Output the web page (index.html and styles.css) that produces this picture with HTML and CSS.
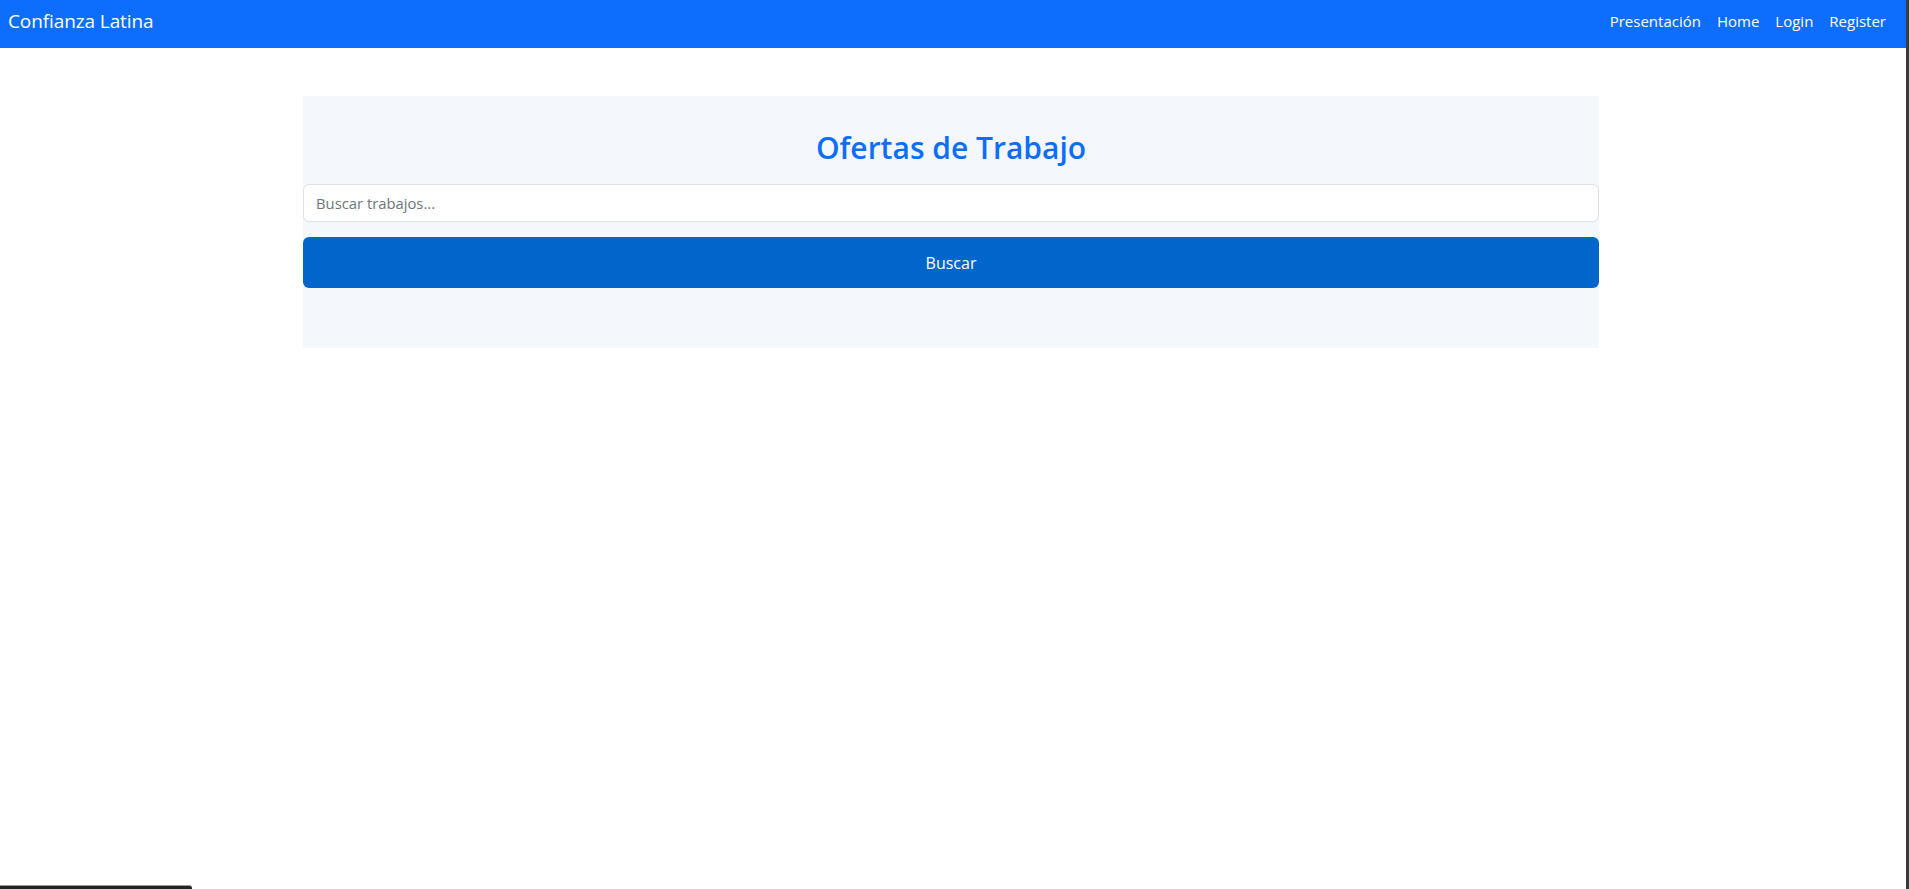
FILE: index.html
```html
<!DOCTYPE html>
<html lang="es">
<head>
<meta charset="utf-8">
<title>Confianza Latina</title>
<link rel="stylesheet" href="styles.css">
</head>
<body>
<div class="shell">
  <div class="page">
    <nav class="navbar">
      <a class="brand" href="#">Confianza Latina</a>
      <ul class="nav-links">
        <li><a href="#">Presentación</a></li>
        <li><a href="#">Home</a></li>
        <li><a href="#">Login</a></li>
        <li><a href="#">Register</a></li>
      </ul>
    </nav>
    <main class="main">
      <section class="card">
        <h2 class="title">Ofertas de Trabajo</h2>
        <form class="search">
          <input class="search-input" type="text" placeholder="Buscar trabajos...">
          <button class="search-btn" type="button">Buscar</button>
        </form>
      </section>
    </main>
  </div>
  <div class="edge"></div>
</div>
<div class="status-bar"></div>
</body>
</html>
```

FILE: styles.css
```css
* { box-sizing: border-box; }
html, body { margin: 0; padding: 0; height: 100%; }
body {
  font-family: "Open Sans", "Noto Sans", sans-serif;
  background: #fff;
  color: #212529;
}
.shell { display: flex; min-height: 100%; }
.page { flex: 1; min-width: 0; }
.edge { width: 3px; background: #3a3a3a; flex: none; }

.navbar {
  height: 48px;
  background: #0d6efd;
  display: flex;
  align-items: center;
  justify-content: space-between;
  padding: 0 12px 7px 8px;
}
.brand {
  color: #fff;
  text-decoration: none;
  font-size: 19px;
  letter-spacing: -0.1px;
}
.nav-links {
  list-style: none;
  margin: 0;
  padding: 0;
  display: flex;
}
.nav-links a {
  display: block;
  padding: 8px;
  color: #fff;
  text-decoration: none;
  font-size: 15px;
}

.main {
  display: flex;
  justify-content: center;
  padding: 48px 4px 0 0;
}
.card {
  width: 1296px;
  background: #f4f7fb;
  padding: 34px 0 60px;
}
.title {
  margin: 0 0 18px;
  text-align: center;
  color: #0d6efd;
  font-size: 30px;
  font-weight: 600;
  line-height: 1.2;
}
.search { display: flex; flex-direction: column; gap: 15px; }
.search-input {
  height: 38px;
  border: 1px solid #dee2e6;
  border-radius: 6px;
  background: #fff;
  padding: 0 12px;
  font-family: inherit;
  font-size: 14.8px;
  color: #212529;
}
.search-input::placeholder { color: #6c757d; }
.search-btn {
  height: 51px;
  border: 0;
  border-radius: 6px;
  background: #0066cc;
  color: #fff;
  font-family: inherit;
  font-size: 16px;
}

.status-bar {
  position: fixed;
  left: 0;
  bottom: 0;
  width: 192px;
  height: 4px;
  background: #222;
  border-top: 1px solid #9a9a9a;
  border-top-right-radius: 3px;
}
```
